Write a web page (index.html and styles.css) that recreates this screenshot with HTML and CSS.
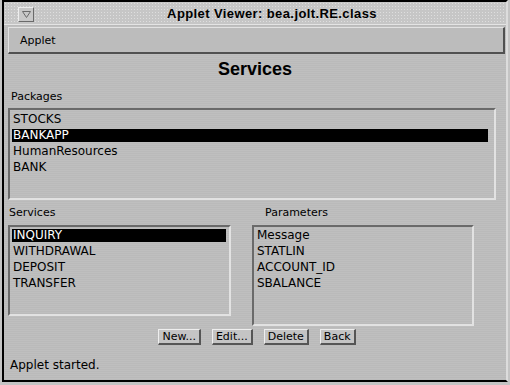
FILE: index.html
```html
<!DOCTYPE html>
<html lang="en">

<head>
    <meta charset="UTF-8" />
    <meta name="viewport" content="width=device-width, initial-scale=1.0" />
    <title>Applet Viewer: bea.jolt.RE.class</title>
    <link rel="stylesheet" href="styles.css">
</head>

<body>
    <div class="window">
        <div class="titlebar">
            <span class="menu-btn">
                <svg width="9" height="7" viewBox="0 0 9 7">
                    <path d="M0.5 0.5 H8.5 L4.5 6.5 Z" fill="none" stroke="#6a6a6a" stroke-width="1" />
                </svg>
            </span>
            <span class="title">Applet Viewer: bea.jolt.RE.class</span>
        </div>

        <div class="menubar"><span>Applet</span></div>

        <div class="applet">
            <h1>Services</h1>

            <div class="label packages-label">Packages</div>
            <ul class="list packages">
                <li>STOCKS</li>
                <li class="selected">BANKAPP</li>
                <li>HumanResources</li>
                <li>BANK</li>
            </ul>

            <div class="columns">
                <div class="col services-col">
                    <div class="label">Services</div>
                    <ul class="list services">
                        <li class="selected">INQUIRY</li>
                        <li>WITHDRAWAL</li>
                        <li>DEPOSIT</li>
                        <li>TRANSFER</li>
                    </ul>
                </div>
                <div class="col params-col">
                    <div class="label">Parameters</div>
                    <ul class="list params">
                        <li>Message</li>
                        <li>STATLIN</li>
                        <li>ACCOUNT_ID</li>
                        <li>SBALANCE</li>
                    </ul>
                </div>
            </div>

            <div class="buttons">
                <button>New...</button>
                <button>Edit...</button>
                <button>Delete</button>
                <button>Back</button>
            </div>
        </div>

        <div class="status">Applet started.</div>
    </div>
</body>

</html>
```

FILE: styles.css
```css
body {
    margin: 0;
    background: #c4c4c4;
    font-family: "DejaVu Sans", sans-serif;
    color: #000;
}

.window {
    box-sizing: border-box;
    width: 506px;
    height: 382px;
    margin-left: 2px;
    border: 2px solid #000;
    border-right-color: #dcdcdc;
    background-color: #bdbdbd;
    background-image: repeating-linear-gradient(to bottom, #bfbfbf 0, #bfbfbf 1px, #bababa 1px, #bababa 2px);
    display: flex;
    flex-direction: column;
    overflow: hidden;
}

/* title bar */
.titlebar {
    height: 22px;
    border-bottom: 1px solid #e4e4e4;
    display: flex;
    align-items: center;
    background-color: #c6c6c6;
    background-image: radial-gradient(circle, #dedede 0.7px, transparent 0.9px);
    background-size: 3px 3px;
}

.menu-btn {
    box-sizing: border-box;
    width: 16px;
    height: 15px;
    margin-left: 14px;
    margin-top: 2px;
    border-top: 1px solid #eeeeee;
    border-left: 1px solid #eeeeee;
    border-bottom: 1px solid #6a6a6a;
    border-right: 1px solid #6a6a6a;
    background: #c8c8c8;
    display: flex;
    align-items: center;
    justify-content: center;
}

.title {
    flex: 1;
    text-align: center;
    font-family: "Liberation Sans", sans-serif;
    font-weight: bold;
    font-size: 13px;
    letter-spacing: 0.4px;
    margin-left: 4px;
}

/* menu bar */
.menubar {
    box-sizing: border-box;
    height: 27px;
    margin: 2px 1px 0 4px;
    border-top: 1px solid #e2e2e2;
    border-left: 1px solid #e2e2e2;
    border-bottom: 2px solid #505050;
    border-right: 2px solid #505050;
    background: #bcbcbc;
    display: flex;
    align-items: center;
    padding-left: 11px;
    font-size: 11px;
}

/* applet area */
.applet {
    display: flex;
    flex-direction: column;
}

h1 {
    margin: 4px 0 0;
    height: 22px;
    line-height: 22px;
    text-align: center;
    font-family: "Liberation Sans", sans-serif;
    font-size: 18px;
    font-weight: bold;
}

.label {
    font-size: 11px;
    line-height: 13px;
    height: 13px;
    white-space: nowrap;
}

.packages-label {
    margin: 10px 0 0 7px;
}

.list {
    box-sizing: border-box;
    list-style: none;
    margin: 0;
    padding: 3px 6px 0 2px;
    border-top: 2px solid #6a6a6a;
    border-left: 2px solid #6a6a6a;
    border-bottom: 2px solid #e2e2e2;
    border-right: 2px solid #e2e2e2;
    font-size: 12px;
    overflow: hidden;
}

.list li {
    height: 13px;
    line-height: 13px;
    margin-bottom: 3px;
    padding-left: 1px;
    white-space: nowrap;
}

.list li.selected {
    background: #000;
    color: #fff;
}

.packages {
    margin: 5px 0 0 4px;
    width: 488px;
    height: 92px;
}

.columns {
    display: flex;
    align-items: flex-start;
    margin-top: 6px;
}

.col .list {
    margin-top: 6px;
    padding: 2px 3px 0 2px;
}

.services-col {
    margin-left: 4px;
    width: 223px;
}

.services-col .label {
    padding-left: 1px;
}

.services {
    height: 91px;
}

.params-col {
    margin-left: 21px;
    width: 222px;
}

.params-col .label {
    padding-left: 13px;
}

.params {
    height: 101px;
}

/* buttons */
.buttons {
    display: flex;
    justify-content: center;
    gap: 11px;
    margin-top: 3px;
    padding-left: 4px;
}

button {
    box-sizing: border-box;
    height: 16px;
    padding: 0 3px;
    font-family: "DejaVu Sans", sans-serif;
    font-size: 11px;
    line-height: 12px;
    color: #000;
    background: #c4c4c4;
    border-top: 1px solid #eeeeee;
    border-left: 1px solid #eeeeee;
    border-bottom: 2px solid #555;
    border-right: 2px solid #555;
    border-radius: 0;
}

.status {
    margin-top: 14px;
    padding-left: 6px;
    font-size: 12px;
    line-height: 13px;
}
```
